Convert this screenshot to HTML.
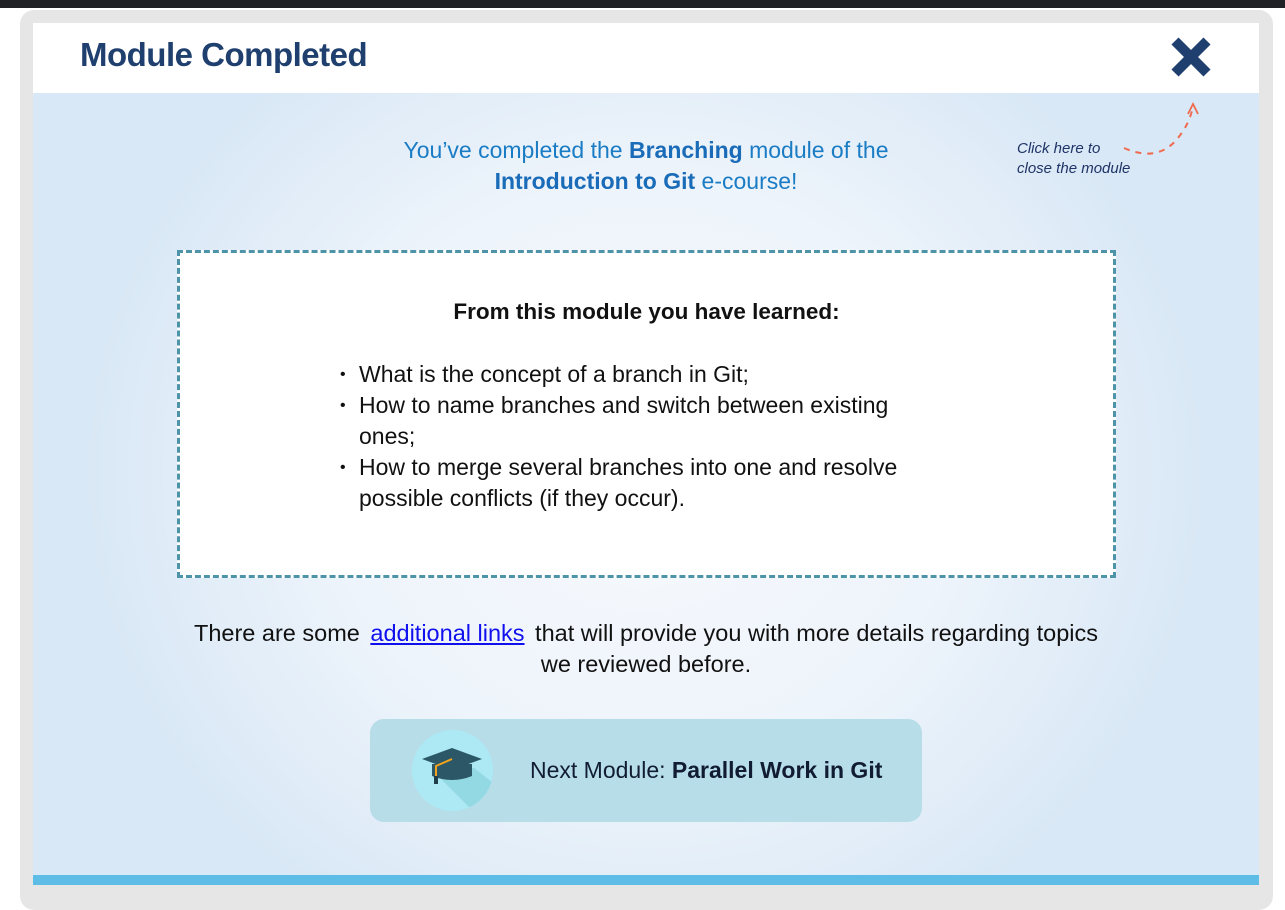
<!DOCTYPE html>
<html><head><style>
*{margin:0;padding:0;box-sizing:border-box}
body{width:1285px;height:885px;overflow:hidden;background:#fff;font-family:"Liberation Sans",sans-serif;position:relative}
.top{position:absolute;left:0;top:0;width:1285px;height:8px;background:#202124}
.frame{position:absolute;left:20px;top:10px;width:1253px;height:900px;background:#e6e6e6;border-radius:14px}
.head{position:absolute;left:33px;top:23px;width:1226px;height:70px;background:#fff}
.head h1{position:absolute;left:47px;top:13px;font-size:33px;color:#1f3f6e;font-weight:bold;letter-spacing:-0.5px}
.body{position:absolute;left:33px;top:93px;width:1226px;height:782px;background:radial-gradient(ellipse 560px 520px at 612px 380px,#f7f9fd 0%,#eef4fb 55%,#d9e8f6 100%)}
.bar{position:absolute;left:33px;top:875px;width:1226px;height:10px;background:#5dbde6}
.intro{position:absolute;left:0;width:1226px;top:42px;text-align:center;font-size:23px;line-height:31px;color:#1a7cc4}
.intro b{color:#1a6cb8}
.hint{position:absolute;left:984px;top:46px;font-size:15px;font-style:italic;color:#1f3466;line-height:20px}
.box{position:absolute;left:144px;top:157px;width:939px;height:328px;background:#fff;border:3px dashed #4d94a8}
.box h2{position:absolute;top:46px;width:100%;text-align:center;font-size:22.5px;color:#111}
.box ul{position:absolute;left:160px;top:106px;width:640px;font-size:23px;line-height:31px;color:#111;list-style:none}
.box li{padding-left:19px;position:relative;white-space:nowrap}
.box li:before{content:"•";position:absolute;left:0;font-size:16px}
.more{position:absolute;left:0;width:1226px;top:525px;text-align:center;font-size:23.5px;line-height:31px;color:#111}
.more a{color:#1010ee;text-decoration:underline;margin:0 4px}
.next{position:absolute;left:337px;top:626px;width:552px;height:103px;background:#b6dde8;border-radius:14px}
.circ{position:absolute;left:42px;top:11px;width:81px;height:81px;border-radius:50%;background:#ace9f4;overflow:hidden}
.next .t{position:absolute;left:160px;top:38px;font-size:23px;color:#111c33}
</style></head><body>
<div class="top"></div>
<div class="frame"></div>
<div class="head"><h1>Module Completed</h1>
<svg style="position:absolute;left:1136px;top:12px" width="44" height="44" viewBox="0 0 44 44"><path d="M6 6L38 38M38 6L6 38" stroke="#1f3f6e" stroke-width="10" stroke-linecap="butt"/></svg>
</div>
<div class="body">
<div class="intro">You’ve completed the <b>Branching</b> module of the<br><b>Introduction to Git</b> e-course!</div>
<div class="hint">Click here to<br>close the module</div>
<svg style="position:absolute;left:1085px;top:5px" width="90" height="65" viewBox="0 0 90 65"><path d="M6 50 Q40 65 60 40 Q72 25 75 8" fill="none" stroke="#ef6b50" stroke-width="2" stroke-dasharray="6 6"/><path d="M70 16L75 6L80 16" fill="none" stroke="#ef6b50" stroke-width="1.8"/></svg>
<div class="box"><h2>From this module you have learned:</h2>
<ul><li>What is the concept of a branch in Git;</li><li>How to name branches and switch between existing<br>ones;</li><li>How to merge several branches into one and resolve<br>possible conflicts (if they occur).</li></ul></div>
<div class="more">There are some <a>additional links</a> that will provide you with more details regarding topics<br>we reviewed before.</div>
<div class="next"><div class="circ"><svg width="81" height="81" viewBox="0 0 81 81"><path d="M20 40 L70 90 L90 60 L62 38Z" fill="#93d9e4"/><path d="M20 34 v12 q20 8 40 0 v-12z" fill="#2b5766"/><path d="M10 29 L40 18 L70 29 L40 40Z" fill="#2b5766"/><path d="M40 29 L24 36 V48" fill="none" stroke="#f2a31d" stroke-width="2"/><rect x="22" y="46" width="4" height="8" fill="#1e3f4a"/></svg></div>
<div class="t">Next Module: <b>Parallel Work in Git</b></div></div>
</div>
<div class="bar"></div>
</body></html>
